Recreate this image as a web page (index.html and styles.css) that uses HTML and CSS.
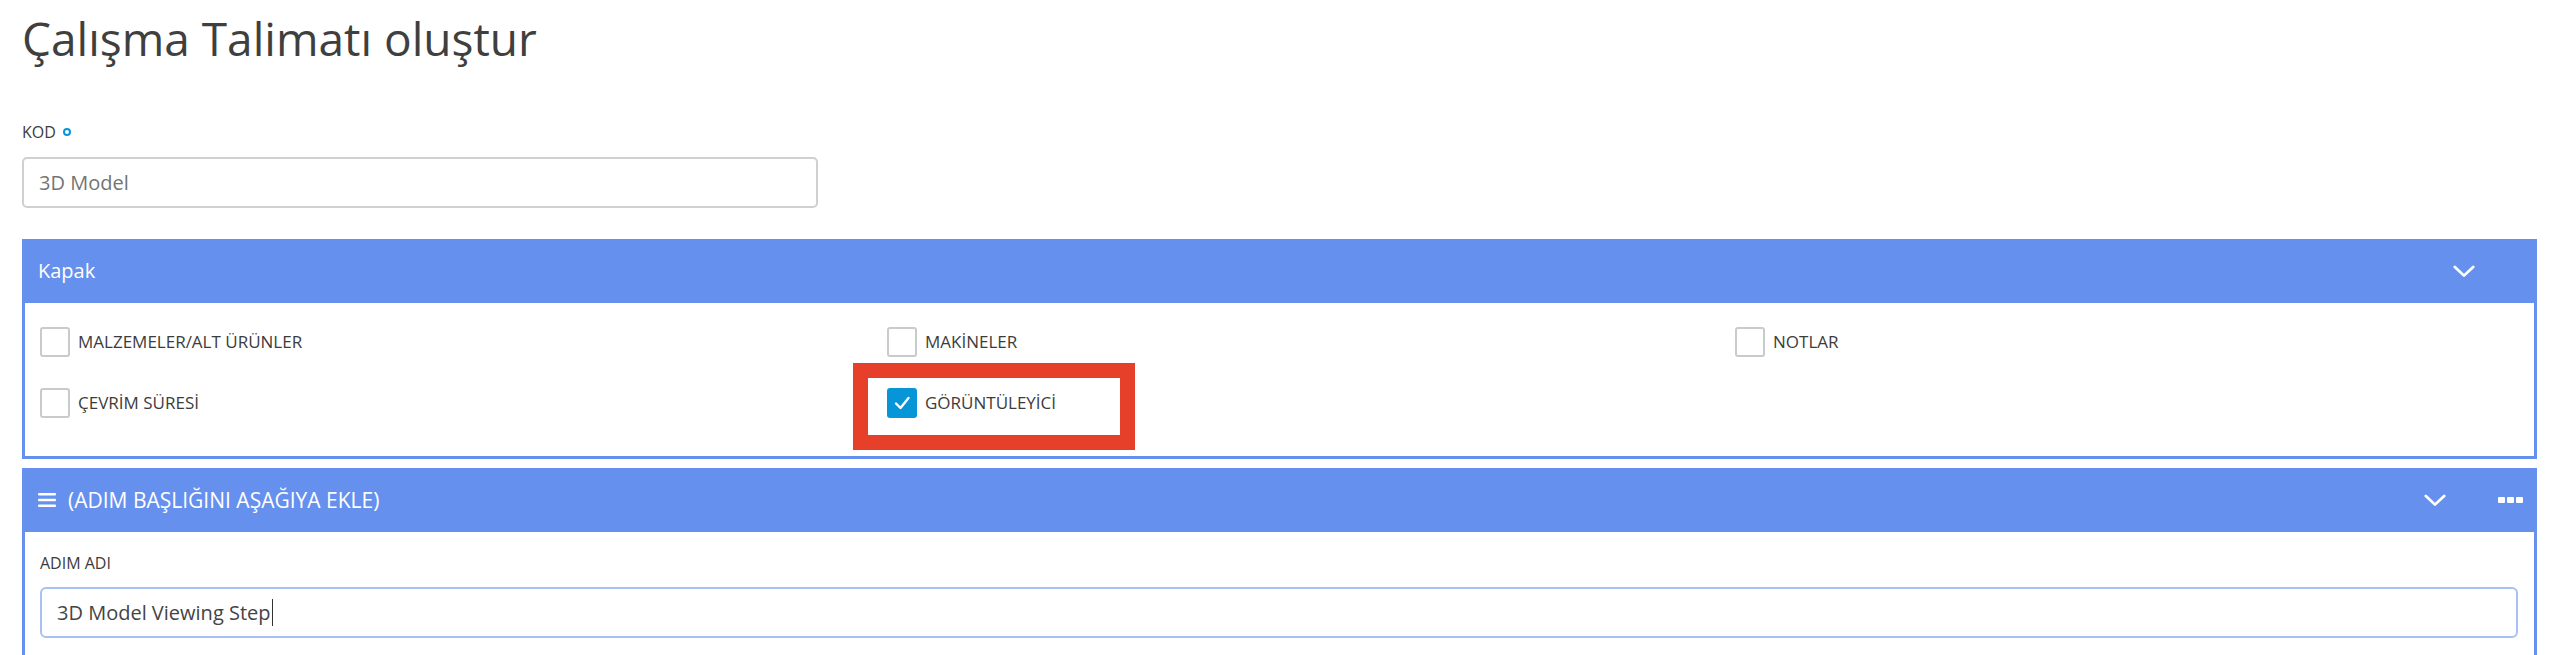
FILE: index.html
```html
<!DOCTYPE html>
<html lang="tr">
<head>
<meta charset="utf-8">
<title>Çalışma Talimatı oluştur</title>
<link rel="stylesheet" href="styles.css">
</head>
<body>
<main class="page">
  <h1 class="page-title">Çalışma Talimatı oluştur</h1>

  <div class="field">
    <label class="field-label">KOD <span class="req-dot"></span></label>
    <div class="text-input code-input">3D Model</div>
  </div>

  <section class="panel">
    <header class="panel-head">
      <span class="panel-title">Kapak</span>
      <span class="head-actions cover-actions">
        <svg class="chev" viewBox="0 0 24 14" width="22" height="13"><polyline points="2,2 12,11.5 22,2" fill="none" stroke="#fff" stroke-width="3" stroke-linecap="round" stroke-linejoin="round"/></svg>
      </span>
    </header>
    <div class="panel-body options">
      <div class="option"><span class="check"></span><span class="opt-label">MALZEMELER/ALT ÜRÜNLER</span></div>
      <div class="option"><span class="check"></span><span class="opt-label">MAKİNELER</span></div>
      <div class="option"><span class="check"></span><span class="opt-label">NOTLAR</span></div>
      <div class="option"><span class="check"></span><span class="opt-label">ÇEVRİM SÜRESİ</span></div>
      <div class="option highlighted">
        <span class="check checked"><svg viewBox="0 0 30 30" width="30" height="30"><polyline points="9,15.5 13.5,20 21.5,10" fill="none" stroke="#fff" stroke-width="2.4" stroke-linecap="round" stroke-linejoin="round"/></svg></span>
        <span class="opt-label">GÖRÜNTÜLEYİCİ</span>
        <span class="annot-box"></span>
      </div>
    </div>
  </section>

  <section class="panel step-panel">
    <header class="panel-head">
      <span class="panel-title step-title">
        <svg class="burger" viewBox="0 0 18 14" width="18" height="14"><rect x="0" y="0" width="18" height="2.6" rx="1" fill="#fff"/><rect x="0" y="5.7" width="18" height="2.6" rx="1" fill="#fff"/><rect x="0" y="11.4" width="18" height="2.6" rx="1" fill="#fff"/></svg>
        (ADIM BAŞLIĞINI AŞAĞIYA EKLE)
      </span>
      <span class="head-actions step-actions">
        <svg class="chev" viewBox="0 0 24 14" width="22" height="13"><polyline points="2,2 12,11.5 22,2" fill="none" stroke="#fff" stroke-width="3" stroke-linecap="round" stroke-linejoin="round"/></svg>
        <span class="dots"><i></i><i></i><i></i></span>
      </span>
    </header>
    <div class="panel-body step-body">
      <label class="field-label step-label">ADIM ADI</label>
      <div class="text-input step-input">3D Model Viewing Step<span class="caret"></span></div>
    </div>
  </section>
</main>
</body>
</html>
```

FILE: styles.css
```css
* { box-sizing: border-box; }

html, body {
  margin: 0;
  padding: 0;
  background: #ffffff;
}

body {
  font-family: "Open Sans", "Noto Sans", sans-serif;
  color: #3c3c3c;
}

.page {
  padding: 10px 25px 0 22px;
}

.page-title {
  margin: 0;
  font-size: 46px;
  line-height: 56px;
  font-weight: 400;
  color: #3f3f3f;
  letter-spacing: 0;
}

.field {
  margin-top: 56px;
}

.field-label {
  display: flex;
  align-items: center;
  gap: 7px;
  font-size: 16px;
  line-height: 20px;
  color: #3c3c3c;
}

.req-dot {
  width: 8px;
  height: 8px;
  border-radius: 50%;
  border: 2px solid #0696d7;
}

.text-input {
  display: flex;
  align-items: center;
  border-radius: 5px;
  font-size: 20px;
}

.code-input {
  margin-top: 15px;
  width: 796px;
  height: 51px;
  border: 2px solid #cfd0d4;
  padding-left: 15px;
  color: #747474;
}

.panel {
  margin-top: 31px;
  width: 2515px;
}

.step-panel {
  margin-top: 9px;
}

.panel-head {
  height: 64px;
  background: #6690ee;
  display: flex;
  align-items: center;
  justify-content: space-between;
  padding: 0 0 0 16px;
  color: #ffffff;
}

.panel-title {
  font-size: 20px;
  line-height: 24px;
  display: flex;
  align-items: center;
}

.step-title {
  font-size: 21px;
  gap: 12px;
}

.burger {
  display: block;
}

.head-actions {
  display: flex;
  align-items: center;
}

.cover-actions {
  padding-right: 62px;
}

.step-actions {
  padding-right: 14px;
  gap: 52px;
}

.chev {
  display: block;
}

.dots {
  display: flex;
  gap: 2px;
}

.dots i {
  width: 7px;
  height: 6px;
  border-radius: 1px;
  background: #ffffff;
}

.panel-body {
  border: 3px solid #6690ee;
  border-top: none;
  background: #ffffff;
}

.options {
  display: grid;
  grid-template-columns: 847px 848px 1fr;
  row-gap: 31px;
  padding: 24px 16px 38px 15px;
}

.option {
  position: relative;
  display: flex;
  align-items: center;
  gap: 8px;
}

.check {
  width: 30px;
  height: 30px;
  border: 2px solid #c9cacd;
  border-radius: 3px;
  background: #ffffff;
  flex: none;
}

.check.checked {
  border-color: #0696d7;
  background: #0696d7;
}

.check.checked svg {
  display: block;
  margin: -2px;
}

.opt-label {
  font-size: 17px;
  line-height: 22px;
  color: #3c3c3c;
}

.annot-box {
  position: absolute;
  left: -34px;
  top: -25px;
  width: 282px;
  height: 87px;
  border: 15px solid #e7402a;
  pointer-events: none;
}

.step-body {
  padding: 21px 16px 18px 15px;
  border-bottom: none;
}

.step-label {
  display: block;
}

.step-input {
  margin-top: 14px;
  height: 51px;
  border: 2px solid #a9c1f2;
  border-radius: 6px;
  padding-left: 15px;
  color: #444444;
}

.caret {
  display: inline-block;
  width: 1.5px;
  height: 27px;
  background: #333333;
  margin-left: 1px;
}
```
